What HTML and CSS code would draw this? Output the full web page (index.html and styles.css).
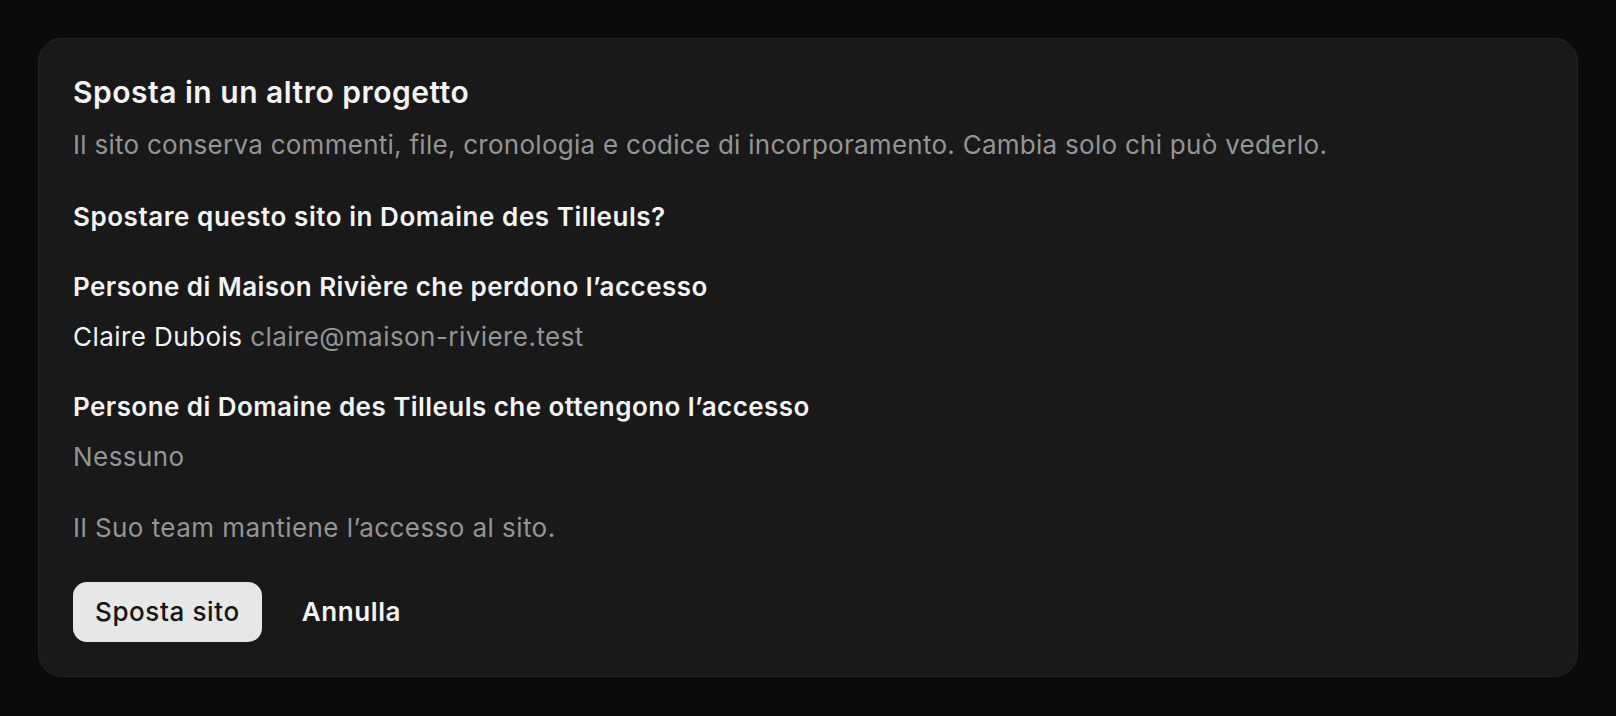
FILE: index.html
```html
<!DOCTYPE html>
<html lang="it">

<head>
  <meta charset="UTF-8">
  <meta name="viewport" content="width=device-width, initial-scale=1.0">
  <title>Sposta in un altro progetto</title>
  <link rel="stylesheet" href="styles.css">
</head>

<body>
  <div class="page">
    <div class="card">
      <h1 class="title">Sposta in un altro progetto</h1>
      <p class="muted desc">Il sito conserva commenti, file, cronologia e codice di incorporamento. Cambia solo chi può vederlo.</p>

      <h2 class="question">Spostare questo sito in Domaine des Tilleuls?</h2>

      <div class="group">
        <h3 class="label">Persone di Maison Rivière che perdono l’accesso</h3>
        <div class="person">Claire Dubois <span class="muted">claire@maison-riviere.test</span></div>
      </div>

      <div class="group">
        <h3 class="label">Persone di Domaine des Tilleuls che ottengono l’accesso</h3>
        <div class="muted">Nessuno</div>
      </div>

      <p class="muted note">Il Suo team mantiene l’accesso al sito.</p>

      <div class="actions">
        <button class="btn btn-primary">Sposta sito</button>
        <button class="btn btn-ghost">Annulla</button>
      </div>
    </div>
  </div>
</body>

</html>
```

FILE: styles.css
```css
body {
  background: #0b0b0b;
  margin: 0;
  padding: 0;
  font-family: Inter, "Liberation Sans", sans-serif;
  color: #f4f4f4;
}

.page {
  padding: 38px;
}

.card {
  background: #191919;
  border: 1px solid #252525;
  border-radius: 24px;
  padding: 33px 34px 34px;
  font-size: 26px;
  line-height: 36px;
  letter-spacing: 0.44px;
}

h1,
h2,
h3,
p {
  margin: 0;
}

.title {
  font-size: 30px;
  line-height: 40px;
  font-weight: 600;
  letter-spacing: 0.5px;
}

.muted {
  color: #959595;
}

.desc {
  margin-top: 15px;
  letter-spacing: 0.27px;
}

.question {
  font-size: 26px;
  font-weight: 600;
  letter-spacing: 0.55px;
  margin-top: 36px;
}

.group {
  margin-top: 34px;
}

.label {
  font-size: 26px;
  font-weight: 600;
  letter-spacing: 0.45px;
  margin-bottom: 14px;
}

.note {
  margin-top: 35px;
}

.actions {
  margin-top: 36px;
  display: flex;
  align-items: center;
  gap: 18px;
}

.btn {
  font-family: inherit;
  font-size: 26px;
  line-height: 36px;
  letter-spacing: 0.6px;
  height: 60px;
  padding: 0 22px;
  border: 0;
  border-radius: 14px;
  cursor: pointer;
}

.btn-primary {
  background: #e7e7e7;
  color: #151515;
  font-weight: 500;
}

.btn-ghost {
  background: transparent;
  color: #f4f4f4;
  font-weight: 600;
}
```
